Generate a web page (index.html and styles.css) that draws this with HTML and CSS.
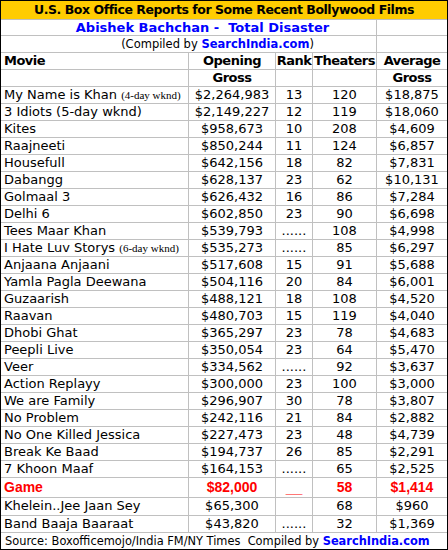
FILE: index.html
```html
<!DOCTYPE html>
<html>
<head>
<meta charset="utf-8">
<link rel="stylesheet" href="styles.css">
</head>
<body>
<div class="board">
  <div class="c title span5">U.S. Box Office Reports for Some Recent Bollywood Films</div>
  <div class="c sub span4">Abishek Bachchan -&nbsp; Total Disaster</div>
  <div class="c"></div>
  <div class="c credit span4">(Compiled by <b class="blue">SearchIndia.com</b>)</div>
  <div class="c"></div>

  <div class="c head name">Movie</div>
  <div class="c head">Opening</div>
  <div class="c head">Rank</div>
  <div class="c head">Theaters</div>
  <div class="c head">Average</div>
  <div class="c head"></div>
  <div class="c head">Gross</div>
  <div class="c head"></div>
  <div class="c head"></div>
  <div class="c head">Gross</div>

  <div class="c name">My Name is Khan <span class="note">(4-day wknd)</span></div><div class="c">$2,264,983</div><div class="c">13</div><div class="c">120</div><div class="c">$18,875</div>
  <div class="c name">3 Idiots (5-day wknd)</div><div class="c">$2,149,227</div><div class="c">12</div><div class="c">119</div><div class="c">$18,060</div>
  <div class="c name">Kites</div><div class="c">$958,673</div><div class="c">10</div><div class="c">208</div><div class="c">$4,609</div>
  <div class="c name">Raajneeti</div><div class="c">$850,244</div><div class="c">11</div><div class="c">124</div><div class="c">$6,857</div>
  <div class="c name">Housefull</div><div class="c">$642,156</div><div class="c">18</div><div class="c">82</div><div class="c">$7,831</div>
  <div class="c name">Dabangg</div><div class="c">$628,137</div><div class="c">23</div><div class="c">62</div><div class="c">$10,131</div>
  <div class="c name">Golmaal 3</div><div class="c">$626,432</div><div class="c">16</div><div class="c">86</div><div class="c">$7,284</div>
  <div class="c name">Delhi 6</div><div class="c">$602,850</div><div class="c">23</div><div class="c">90</div><div class="c">$6,698</div>
  <div class="c name">Tees Maar Khan</div><div class="c">$539,793</div><div class="c">......</div><div class="c">108</div><div class="c">$4,998</div>
  <div class="c name">I Hate Luv Storys <span class="note">(6-day wknd)</span></div><div class="c">$535,273</div><div class="c">......</div><div class="c">85</div><div class="c">$6,297</div>
  <div class="c name">Anjaana Anjaani</div><div class="c">$517,608</div><div class="c">15</div><div class="c">91</div><div class="c">$5,688</div>
  <div class="c name">Yamla Pagla Deewana</div><div class="c">$504,116</div><div class="c">20</div><div class="c">84</div><div class="c">$6,001</div>
  <div class="c name">Guzaarish</div><div class="c">$488,121</div><div class="c">18</div><div class="c">108</div><div class="c">$4,520</div>
  <div class="c name">Raavan</div><div class="c">$480,703</div><div class="c">15</div><div class="c">119</div><div class="c">$4,040</div>
  <div class="c name">Dhobi Ghat</div><div class="c">$365,297</div><div class="c">23</div><div class="c">78</div><div class="c">$4,683</div>
  <div class="c name">Peepli Live</div><div class="c">$350,054</div><div class="c">23</div><div class="c">64</div><div class="c">$5,470</div>
  <div class="c name">Veer</div><div class="c">$334,562</div><div class="c">......</div><div class="c">92</div><div class="c">$3,637</div>
  <div class="c name">Action Replayy</div><div class="c">$300,000</div><div class="c">23</div><div class="c">100</div><div class="c">$3,000</div>
  <div class="c name">We are Family</div><div class="c">$296,907</div><div class="c">30</div><div class="c">78</div><div class="c">$3,807</div>
  <div class="c name">No Problem</div><div class="c">$242,116</div><div class="c">21</div><div class="c">84</div><div class="c">$2,882</div>
  <div class="c name">No One Killed Jessica</div><div class="c">$227,473</div><div class="c">23</div><div class="c">48</div><div class="c">$4,739</div>
  <div class="c name">Break Ke Baad</div><div class="c">$194,737</div><div class="c">26</div><div class="c">85</div><div class="c">$2,291</div>
  <div class="c name">7 Khoon Maaf</div><div class="c">$164,153</div><div class="c">......</div><div class="c">65</div><div class="c">$2,525</div>

  <div class="c name game">Game</div><div class="c game">$82,000</div><div class="c game dash">__</div><div class="c game">58</div><div class="c game">$1,414</div>

  <div class="c name">Khelein..Jee Jaan Sey</div><div class="c">$65,300</div><div class="c"></div><div class="c">68</div><div class="c">$960</div>
  <div class="c name">Band Baaja Baaraat</div><div class="c">$43,820</div><div class="c">......</div><div class="c">32</div><div class="c">$1,369</div>

  <div class="c name source span5">Source: Boxofficemojo/India FM/NY Times&nbsp; Compiled by <b class="blue">SearchIndia.com</b></div>
</div>
</body>
</html>
```

FILE: styles.css
```css
html, body {
  margin: 0;
  padding: 0;
  background: #ffffff;
}

.board {
  width: 446px;
  display: grid;
  grid-template-columns: 187px 86px 36px 63px 70px;
  grid-template-rows: 18px 15px 16px 16px 16px repeat(23, 16px) 19px 17px 16px 16px;
  gap: 1px;
  background: #c0c0c0;
  border: 1px solid #000000;
  font-family: "DejaVu Sans", Verdana, sans-serif;
  font-size: 13px;
  color: #000000;
}

.c {
  background: #ffffff;
  text-align: center;
  line-height: 16px;
  white-space: nowrap;
  overflow: hidden;
}

.span5 { grid-column: span 5; }
.span4 { grid-column: span 4; }

.title {
  background: #ffcc00;
  font-weight: bold;
  font-size: 12.5px;
  line-height: 18px;
  letter-spacing: -0.45px;
}

.sub {
  color: #0000ff;
  font-weight: bold;
  line-height: 15px;
  padding-left: 28px;
}

.credit {
  font-size: 11.5px;
  padding-left: 58px;
}

.blue {
  color: #0000ff;
}

.head {
  font-weight: bold;
  letter-spacing: -0.5px;
}

.name {
  text-align: left;
  padding-left: 3px;
}

.note {
  font-family: "Liberation Serif", "Times New Roman", serif;
  font-size: 11px;
}

.game {
  color: #ff0000;
  font-family: "Liberation Sans", Arial, sans-serif;
  font-weight: bold;
  font-size: 14px;
  line-height: 19px;
}

.dash {
  font-size: 15px;
  line-height: 16px;
  padding-top: 2px;
}

.source {
  font-size: 11.4px;
  padding-left: 4px;
}
```
